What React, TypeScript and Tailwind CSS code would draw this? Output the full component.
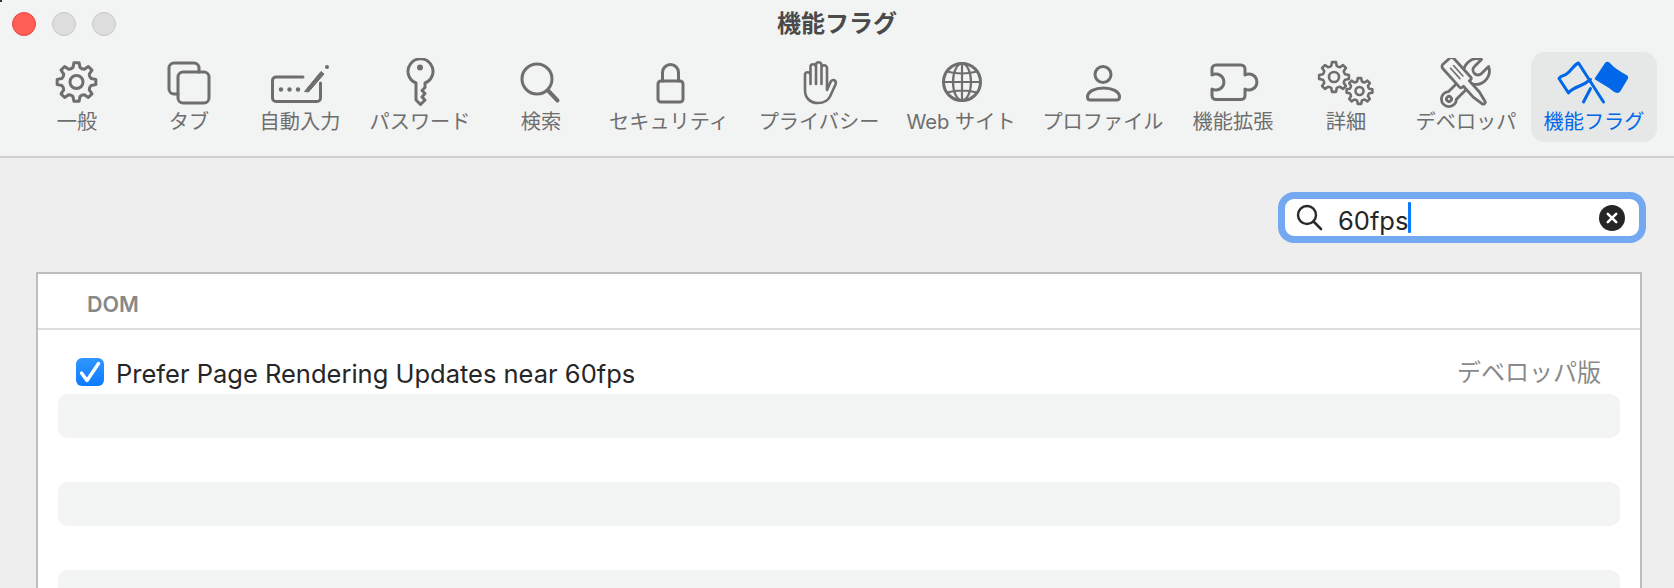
import React from "react";

const GRAY = "#6e6e6e";
const BLUE = "#0068e8";

function gearPath(cx: number, cy: number, ro: number, ri: number, teeth: number) {
  const pts: string[] = [];
  const step = (Math.PI * 2) / teeth;
  for (let i = 0; i < teeth; i++) {
    const a = i * step - Math.PI / 2;
    const list: [number, number][] = [
      [ri, a - step * 0.3],
      [ro, a - step * 0.17],
      [ro, a + step * 0.17],
      [ri, a + step * 0.3],
    ];
    for (const [r, t] of list) {
      pts.push(`${(cx + r * Math.cos(t)).toFixed(2)} ${(cy + r * Math.sin(t)).toFixed(2)}`);
    }
  }
  let d = `M${pts[0]}`;
  for (let i = 1; i < pts.length; i++) {
    if (i % 4 === 0) d += ` Q${(cx + ri * 0.92 * Math.cos((i / 4 - 0.5) * step - Math.PI / 2)).toFixed(2)} ${(cy + ri * 0.92 * Math.sin((i / 4 - 0.5) * step - Math.PI / 2)).toFixed(2)} ${pts[i]}`;
    else d += ` L${pts[i]}`;
  }
  const lastMid = (teeth - 0.5) * step - Math.PI / 2;
  d += ` Q${(cx + ri * 0.92 * Math.cos(lastMid)).toFixed(2)} ${(cy + ri * 0.92 * Math.sin(lastMid)).toFixed(2)} ${pts[0]} Z`;
  return d;
}

const S = { fill: "none", stroke: GRAY, strokeWidth: 3, strokeLinecap: "round", strokeLinejoin: "round" } as const;

const icons: Record<string, React.ReactNode> = {
  gear: (
    <g {...S}>
      <path d={gearPath(76.5, 82, 19.5, 15, 8)} />
      <circle cx={76.5} cy={82} r={6.5} />
    </g>
  ),
  tabs: (
    <g {...S}>
      <path d="M178 94 H174 a5 5 0 0 1 -5 -5 V68 a5 5 0 0 1 5 -5 H194 a5 5 0 0 1 5 5 V72" />
      <rect x={178} y={72} width={31} height={31} rx={5} />
    </g>
  ),
  autofill: (
    <g>
      <path {...S} d="M303 77 H276 a3.5 3.5 0 0 0 -3.5 3.5 V98 a3.5 3.5 0 0 0 3.5 3.5 H317 a3.5 3.5 0 0 0 3.5 -3.5 V83" />
      <circle cx={281} cy={89.5} r={2.2} fill={GRAY} />
      <circle cx={289.5} cy={89.5} r={2.2} fill={GRAY} />
      <circle cx={298} cy={89.5} r={2.2} fill={GRAY} />
      <path d="M304.5 91.5 L321 71.5 L324 74 L308.5 92 Z" fill={GRAY} stroke={GRAY} strokeWidth={1} strokeLinejoin="round" />
      <circle cx={327} cy={67} r={2} fill={GRAY} />
    </g>
  ),
  key: (
    <g>
      <path {...S} d="M416 83 V100 L420.5 104.5 L425 100 L422 97 L425 93.5 L422 90.5 L425 87.5 V83 A12.5 12.5 0 1 0 416 83 Z" />
      <circle cx={420} cy={67.5} r={3} fill={GRAY} />
    </g>
  ),
  search: (
    <g {...S}>
      <circle cx={537} cy={79} r={15} />
      <path d="M548 90.5 L557.5 100.5" strokeWidth={4} />
    </g>
  ),
  lock: (
    <g {...S}>
      <rect x={658} y={81} width={25} height={21} rx={3} />
      <path d="M662.5 81 V72.5 a8 8 0 0 1 16 0 V81" />
    </g>
  ),
  hand: (
    <g {...S} strokeWidth={2.6}>
      <path d="M805 90 V75 a2.75 2.75 0 0 1 5.5 0 V84 M810.5 75 V67 a2.75 2.75 0 0 1 5.5 0 V84 M816 67 V65 a2.75 2.75 0 0 1 5.5 0 V84 M821.5 68 a2.75 2.75 0 0 1 5.5 0 V90 L830.5 82 C832.5 78.5 837 80 835.5 84.5 L830 96.5 C828 100.5 823.5 103 818 103 C810 103 805 98 805 90" />
    </g>
  ),
  globe: (
    <g {...S}>
      <circle cx={962} cy={82} r={18.5} />
      <g strokeWidth={2.2}>
        <ellipse cx={962} cy={82} rx={9} ry={18.5} />
        <path d="M962 63.5 V100.5 M943.5 82 H980.5 M947 71.5 Q962 75.5 977 71.5 M947 92.5 Q962 88.5 977 92.5" />
      </g>
    </g>
  ),
  person: (
    <g {...S}>
      <circle cx={1103} cy={74.5} r={8} />
      <path d="M1087.5 97 C1087.5 91.5 1095 88 1103.5 88 C1112 88 1119.5 91.5 1119.5 97 C1119.5 99 1118.5 100 1116.5 100 H1090.5 C1088.5 100 1087.5 99 1087.5 97 Z" />
    </g>
  ),
  puzzle: (
    <g {...S}>
      <path d="M1216 65 H1241 a4 4 0 0 1 4 4 V75 a8 8 0 1 1 0 14 V95.5 a4 4 0 0 1 -4 4 H1216 a4 4 0 0 1 -4 -4 V89 a8 8 0 1 0 0 -14 V69 a4 4 0 0 1 4 -4 Z" />
    </g>
  ),
  gears: (
    <g {...S} strokeWidth={2.6}>
      <path d={gearPath(1334, 77, 15, 11.5, 8)} />
      <circle cx={1334} cy={77} r={5} />
      <path d={gearPath(1359.5, 91, 13, 10, 8)} />
      <circle cx={1359.5} cy={91} r={4} />
    </g>
  ),
  tools: (
    <g {...S} strokeWidth={2.8}>
      <g transform="translate(1449 99) rotate(-45)">
        <path d="M5 -5.5 L27 -5.5 A13.5 13.5 0 0 1 51 -5 L41 -5 A5 5 0 0 0 41 5 L51 5 A13.5 13.5 0 0 1 27 5.5 L5 5.5 A7.5 7.5 0 1 1 5 -5.5 Z" />
        <circle cx={0} cy={0} r={2.5} />
      </g>
      <g transform="translate(1447 62) rotate(48)">
        <path
          d="M2 -7.5 H27 a2 2 0 0 1 2 2 V-4 H44 L54 -2 a2 2 0 0 1 0 4 L44 4 H29 V5.5 a2 2 0 0 1 -2 2 H2 a3 3 0 0 1 -3 -3 V-4.5 a3 3 0 0 1 3 -3 Z"
          fill="#f2f3f3"
        />
        <path d="M7 -2.5 H21 M7 1.5 H21" strokeWidth={1.6} />
      </g>
    </g>
  ),
  flags: (
    <g fill="none" stroke={BLUE} strokeWidth={3} strokeLinecap="round" strokeLinejoin="round">
      <path d="M1603 102 L1578 63 C1573 65 1571 71 1566 74 C1563 76 1560 76 1558.5 78.5 L1568 93 C1570 90 1574 88 1579 86 C1584 84 1587 82 1590 79.5" />
      <path d="M1590 88.5 L1583 102" />
      <path
        d="M1594.5 78 L1604.5 63 C1606 61 1608 61.5 1610 63.5 C1614 68 1619 71 1626 75 C1628 76 1628 78 1627 79.5 L1620 91 C1618.5 93.5 1616 93.5 1613 91.5 C1608 87 1601 83.5 1595.5 80 C1594 79.5 1594 79 1594.5 78 Z"
        fill={BLUE}
        stroke="none"
      />
    </g>
  ),
};

type Item = { label: string; icon: string; cx: number; w: string; active?: boolean };

const items: Item[] = [
  { label: "一般", icon: "gear", cx: 77, w: "w-[100px]" },
  { label: "タブ", icon: "tabs", cx: 189, w: "w-[124px]" },
  { label: "自動入力", icon: "autofill", cx: 300, w: "w-[98px]" },
  { label: "パスワード", icon: "key", cx: 420, w: "w-[142px]" },
  { label: "検索", icon: "search", cx: 541, w: "w-[100px]" },
  { label: "セキュリティ", icon: "lock", cx: 669, w: "w-[156px]" },
  { label: "プライバシー", icon: "hand", cx: 819, w: "w-[144px]" },
  { label: "Web サイト", icon: "globe", cx: 961, w: "w-[140px]" },
  { label: "プロファイル", icon: "person", cx: 1103, w: "w-[144px]" },
  { label: "機能拡張", icon: "puzzle", cx: 1233, w: "w-[116px]" },
  { label: "詳細", icon: "gears", cx: 1346, w: "w-[110px]" },
  { label: "デベロッパ", icon: "tools", cx: 1466, w: "w-[130px]" },
  { label: "機能フラグ", icon: "flags", cx: 1593.5, w: "w-[126px]", active: true },
];

export default function App() {
  return (
    <div className="relative w-[1674px] h-[588px] overflow-hidden bg-[#eeeeee] font-['Inter','Noto_Sans_CJK_JP',sans-serif]">
      <span className="absolute left-0 top-0 w-[2px] h-[2px] bg-[#333333]" />
      <header className="h-[158px] bg-[#f2f3f3] border-b-2 border-[#cfcfcf]">
        <div className="h-[48px] grid grid-cols-[1fr_auto_1fr] items-center">
          <div className="flex gap-4 pl-3">
            <span className="w-6 h-6 rounded-full bg-[#ff5f57] border border-[#e2463f]" />
            <span className="w-6 h-6 rounded-full bg-[#dcdddc] border border-[#c6c7c6]" />
            <span className="w-6 h-6 rounded-full bg-[#dcdddc] border border-[#c6c7c6]" />
          </div>
          <h1 className="text-[24px] leading-[30px] font-bold text-[#4a4a4a]">機能フラグ</h1>
          <div />
        </div>
        <nav className="flex pl-[27px] mt-[4px]">
          {items.map((it) => (
            <div
              key={it.label}
              className={`${it.w} h-[90px] shrink-0 flex flex-col items-center rounded-[14px] ${it.active ? "bg-[#e6e7e7]" : ""}`}
            >
              <svg
                width={76}
                height={50}
                viewBox={`${it.cx - 38} 58 76 50`}
                className="mt-[6px] shrink-0"
              >
                {icons[it.icon]}
              </svg>
              <span
                className={`text-[20.2px] leading-[26px] mt-[1px] whitespace-nowrap ${it.active ? "text-[#0068e8]" : "text-[#6e6e6e]"}`}
              >
                {it.label}
              </span>
            </div>
          ))}
        </nav>
      </header>

      <div className="flex justify-end pr-[28px] pt-[34px]">
        <div className="w-[368px] h-[51px] border-[7px] border-[#74a9f1] rounded-[16px] bg-white flex items-center pl-[12px] pr-[14px]">
          <svg width={28} height={28} viewBox="0 0 28 28" className="shrink-0 ml-[-1px]">
            <circle cx={11} cy={11} r={9} fill="none" stroke="#2a2a2a" strokeWidth={2.4} />
            <path d="M17.5 17.5 L25 25" stroke="#2a2a2a" strokeWidth={2.6} strokeLinecap="round" />
          </svg>
          <span className="ml-[14px] mt-[6px] text-[25.5px] leading-[30px] text-[#262626]">60fps</span>
          <span className="w-[3px] h-[31px] bg-[#0a7aff] rounded-[1px] shrink-0" />
          <span className="flex-1" />
          <svg width={26} height={26} viewBox="0 0 26 26" className="shrink-0">
            <circle cx={13} cy={13} r={13} fill="#252525" />
            <path d="M8.8 8.8 L17.2 17.2 M17.2 8.8 L8.8 17.2" stroke="#fff" strokeWidth={2.6} strokeLinecap="round" />
          </svg>
        </div>
      </div>

      <section className="ml-[36px] mr-[32px] mt-[29px] border-2 border-[#bdbdbd] bg-white h-[400px]">
        <div className="h-[56px] border-b-2 border-[#dcdcdc] flex items-center pl-[49px]">
          <span className="text-[21.5px] mt-[6px] font-semibold text-[#888888]">DOM</span>
        </div>
        <div className="mx-5 mt-[20px]">
          <div className="h-[44px] flex items-center pl-[18px] pr-[19px]">
            <span className="w-7 h-7 rounded-[6px] bg-gradient-to-b from-[#2f97ff] to-[#0a7aff] flex items-center justify-center shrink-0">
              <svg width={28} height={28} viewBox="0 0 28 28">
                <path d="M5.5 15 L11 22.5 L22.5 5.5" fill="none" stroke="#fff" strokeWidth={3.4} strokeLinecap="round" strokeLinejoin="round" />
              </svg>
            </span>
            <span className="ml-[12px] mt-[3px] text-[25.5px] leading-[30px] text-[#262626]">Prefer Page Rendering Updates near 60fps</span>
            <span className="ml-auto mt-[2px] text-[24px] leading-[30px] text-[#8a8a8a]">デベロッパ版</span>
          </div>
          <div className="h-[44px] rounded-[10px] bg-[#f3f5f5]" />
          <div className="h-[44px]" />
          <div className="h-[44px] rounded-[10px] bg-[#f3f5f5]" />
          <div className="h-[44px]" />
          <div className="h-[44px] rounded-[10px] bg-[#f3f5f5]" />
        </div>
      </section>
    </div>
  );
}
